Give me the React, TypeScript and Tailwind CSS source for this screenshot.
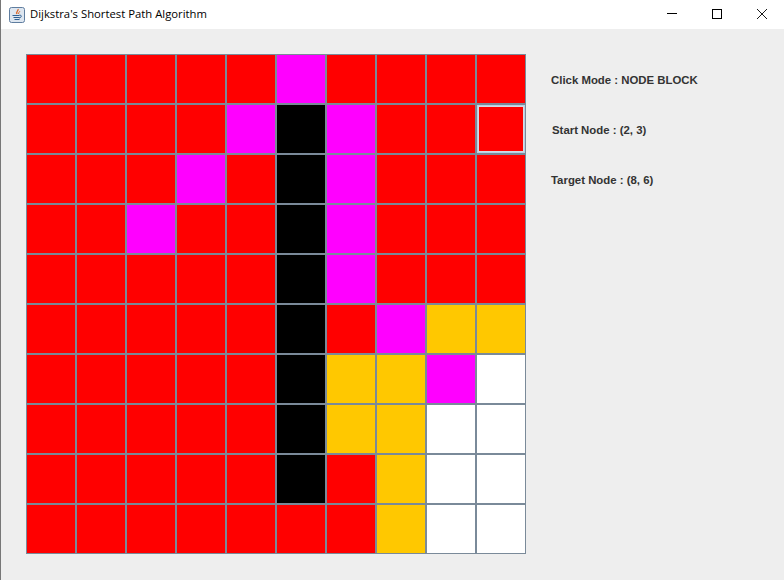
const R = "bg-[#ff0000]";
const M = "bg-[#ff00ff]";
const K = "bg-black";
const O = "bg-[#ffc800]";
const W = "bg-white";

const grid = [
  [R, R, R, R, R, M, R, R, R, R],
  [R, R, R, R, M, K, M, R, R, R],
  [R, R, R, M, R, K, M, R, R, R],
  [R, R, M, R, R, K, M, R, R, R],
  [R, R, R, R, R, K, M, R, R, R],
  [R, R, R, R, R, K, R, M, O, O],
  [R, R, R, R, R, K, O, O, M, W],
  [R, R, R, R, R, K, O, O, W, W],
  [R, R, R, R, R, K, R, O, W, W],
  [R, R, R, R, R, R, R, O, W, W],
];

function JavaIcon() {
  return (
    <svg width="16" height="16" viewBox="0 0 16 16">
      <rect x="0.5" y="0.5" width="15" height="15" rx="2" fill="#dde6f0" stroke="#5f7d9f" />
      <path d="M9 2c1 1.500-2.500 2.500-1 5" fill="none" stroke="#d9682b" strokeWidth="1.300" />
      <path d="M11 4c-.5 1-1.800 1.500-1.300 3" fill="none" stroke="#d9682b" strokeWidth="1" />
      <path d="M3.500 8.500h7M4.500 10.500h6M5.500 12.500h5" stroke="#2f5f92" strokeWidth="1" />
      <path d="M10.500 8c2.500 0 2.500 2.500-.5 3" fill="none" stroke="#2f5f92" strokeWidth="1" />
    </svg>
  );
}

function WindowButtons() {
  return (
    <div className="ml-auto flex items-center -mt-px">
      <div className="w-[45px] flex justify-center">
        <svg width="10" height="10" viewBox="0 0 10 10">
          <path d="M0 4.500h10" stroke="#000" strokeWidth="1" />
        </svg>
      </div>
      <div className="w-[45px] mr-px flex justify-center">
        <svg width="10" height="10" viewBox="0 0 10 10">
          <rect x="0.500" y="0.500" width="9" height="9" fill="none" stroke="#000" strokeWidth="1" />
        </svg>
      </div>
      <div className="w-[44px] flex justify-center">
        <svg width="10" height="10" viewBox="0 0 10 10">
          <path d="M0 0l10 10M10 0L0 10" stroke="#000" strokeWidth="0.900" />
        </svg>
      </div>
    </div>
  );
}

export default function App() {
  return (
    <div className="w-[784px] h-[580px] overflow-hidden flex flex-col bg-[#eeeeee] border-l border-[#777777] font-['Liberation_Sans',sans-serif]">
      <div className="h-[29px] bg-white flex items-center shrink-0">
        <div className="ml-[8px] mr-[5px] flex">
          <JavaIcon />
        </div>
        <span className="text-[11.300px] text-black font-['Open_Sans',sans-serif]">Dijkstra's Shortest Path Algorithm</span>
        <WindowButtons />
      </div>
      <div className="flex pl-[25px] pt-[25px]">
        <div className="grid grid-cols-[repeat(10,50px)] grid-rows-[repeat(10,50px)] shrink-0">
          {grid.flatMap((row, y) =>
            row.map((c, x) => (
              <div key={`${x}-${y}`} className={`border border-[#7a8a99] ${c}`}>
                {x === 9 && y === 1 ? (
                  <div className="w-full h-full border border-[#b8cfe5]">
                    <div className="w-full h-full border border-[#d5dce4]" />
                  </div>
                ) : null}
              </div>
            ))
          )}
        </div>
        <div className="flex flex-col text-[11.400px] font-bold text-[#333333] leading-[14px] pl-[25px] pt-[19px] gap-[36px] whitespace-nowrap">
          <span>Click Mode : NODE BLOCK</span>
          <span className="pl-px">Start Node : (2, 3)</span>
          <span>Target Node : (8, 6)</span>
        </div>
      </div>
    </div>
  );
}
